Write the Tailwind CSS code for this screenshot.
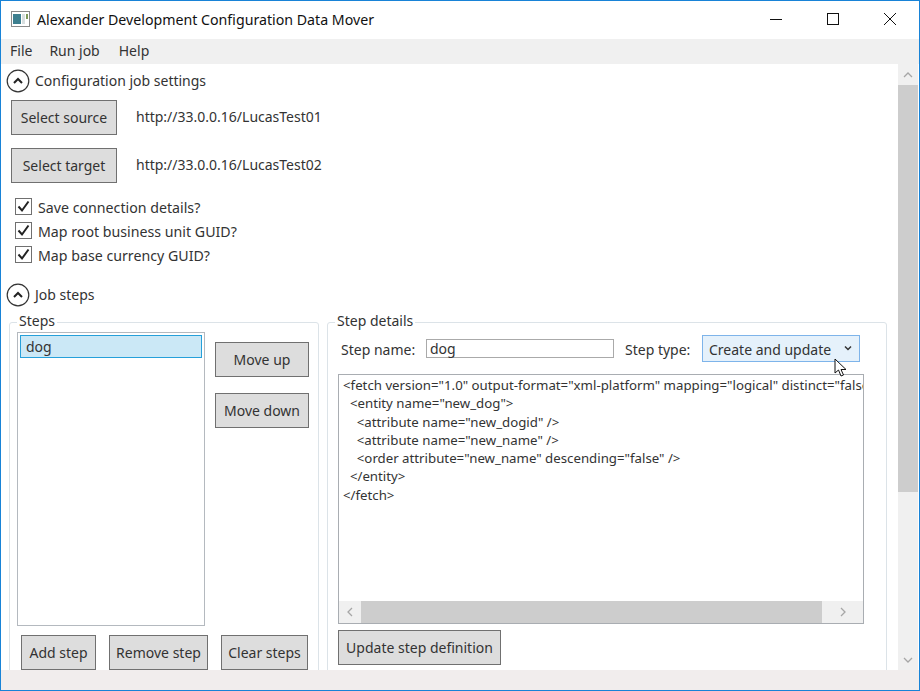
<!DOCTYPE html>
<html lang="en">
<head>
    <meta charset="UTF-8">
    <meta name="viewport" content="width=device-width, initial-scale=1.0">
    <title>Alexander Development Configuration Data Mover</title>
    <script src="https://cdn.jsdelivr.net/npm/@tailwindcss/browser@4"></script>
</head>
<body class="w-[920px] h-[691px] overflow-hidden bg-white">
    <div class="w-[920px] h-[691px] flex flex-col border border-[#1883d7] font-['Noto_Sans',sans-serif] text-[14px] leading-5 text-[#333]">

        <!-- Title bar -->
        <div class="h-[38px] shrink-0 flex items-center pl-[10px] pb-[2px] text-[#111]">
            <svg class="w-[19px] h-[16px]" viewBox="0 0 19 16">
                <rect x="0.5" y="0.5" width="18" height="15" fill="#fff" stroke="#8a8a8a"/>
                <rect x="2" y="3" width="8" height="10" fill="#3d7f8f"/>
                <rect x="11" y="3" width="3" height="10" fill="#d8dfe0"/>
                <rect x="15" y="3" width="2" height="5" fill="#7d9a5a"/>
            </svg>
            <span class="ml-[7px] mt-[2px] text-[14.2px] text-[#111]">Alexander Development Configuration Data Mover</span>
            <div class="ml-auto flex items-center">
                <svg class="w-3 h-3 mr-[45px]" viewBox="0 0 12 12"><path d="M0 6.5H12" stroke="#111" fill="none"/></svg>
                <svg class="w-3 h-3 mr-[45px]" viewBox="0 0 12 12"><rect x="0.5" y="0.5" width="11" height="11" stroke="#111" fill="none"/></svg>
                <svg class="w-3 h-3 mr-[23px]" viewBox="0 0 12 12"><path d="M0 0L12 12M12 0L0 12" stroke="#111" fill="none"/></svg>
            </div>
        </div>

        <!-- Menu -->
        <div class="h-[25px] shrink-0 bg-[#f0f0f0] flex items-center pl-[9px] pb-[1px] gap-[17px]">
            <span>File</span>
            <span>Run job</span>
            <span class="ml-[2px]">Help</span>
        </div>

        <!-- Content and scrollbar -->
        <div class="h-[606px] shrink-0 flex overflow-hidden">
            <div class="w-[897px] shrink-0 pl-[5px] overflow-hidden">
                <div class="h-[34px] flex items-center gap-[5px]">
                    <svg class="w-6 h-6" viewBox="0 0 24 24"><circle cx="12" cy="12" r="10.8" fill="#fff" stroke="#333" stroke-width="1.2"/><path d="M8 14L12 10L16 14" fill="none" stroke="#222" stroke-width="2"/></svg>
                    <span>Configuration job settings</span>
                </div>

                <div class="pl-[5px] flex items-center gap-[19px] mt-[2px]">
                    <button class="w-[106px] h-[35px] bg-[#dddddd] border border-[#707070] text-[#333]">Select source</button>
                    <span class="-mt-[2px]">http://33.0.0.16/LucasTest01</span>
                </div>
                <div class="pl-[5px] flex items-center gap-[19px] mt-[13px]">
                    <button class="w-[106px] h-[35px] bg-[#dddddd] border border-[#707070] text-[#333]">Select target</button>
                    <span class="-mt-[2px]">http://33.0.0.16/LucasTest02</span>
                </div>

                <div class="pl-[9px] mt-[15px] flex flex-col gap-[7px]">
                    <div class="h-[17px] flex items-center gap-[6px]">
                        <svg class="w-[17px] h-[17px]" viewBox="0 0 17 17"><rect x="0.5" y="0.5" width="16" height="16" fill="#fff" stroke="#707070"/><path d="M3.5 8.5L7 12.5L13.5 3.5" fill="none" stroke="#222" stroke-width="2"/></svg>
                        <span class="mt-[2px] text-[14.2px]">Save connection details?</span>
                    </div>
                    <div class="h-[17px] flex items-center gap-[6px]">
                        <svg class="w-[17px] h-[17px]" viewBox="0 0 17 17"><rect x="0.5" y="0.5" width="16" height="16" fill="#fff" stroke="#707070"/><path d="M3.5 8.5L7 12.5L13.5 3.5" fill="none" stroke="#222" stroke-width="2"/></svg>
                        <span class="mt-[2px] text-[14.2px]">Map root business unit GUID?</span>
                    </div>
                    <div class="h-[17px] flex items-center gap-[6px]">
                        <svg class="w-[17px] h-[17px]" viewBox="0 0 17 17"><rect x="0.5" y="0.5" width="16" height="16" fill="#fff" stroke="#707070"/><path d="M3.5 8.5L7 12.5L13.5 3.5" fill="none" stroke="#222" stroke-width="2"/></svg>
                        <span class="mt-[2px] text-[14.2px]">Map base currency GUID?</span>
                    </div>
                </div>

                <div class="h-[34px] flex items-center gap-[5px] mt-[15px]">
                    <svg class="w-6 h-6" viewBox="0 0 24 24"><circle cx="12" cy="12" r="10.8" fill="#fff" stroke="#333" stroke-width="1.2"/><path d="M8 14L12 10L16 14" fill="none" stroke="#222" stroke-width="2"/></svg>
                    <span class="-mt-[1px]">Job steps</span>
                </div>

                <div class="flex mt-[10px] ml-[3px] gap-[8px]">
                    <!-- Steps group -->
                    <div class="relative w-[310px] h-[360px] shrink-0 border border-[#dce3e8] rounded-[3px] pl-[7px] pt-[9px]">
                        <span class="absolute left-[7px] -top-[12px] bg-white px-[2px]">Steps</span>
                        <div class="flex gap-[10px]">
                            <div class="w-[188px] h-[294px] shrink-0 border border-[#b4b9bf] p-[2px]">
                                <div class="h-[23px] bg-[#cbe8f6] border border-[#26a0da] pl-[5px] leading-[22px]">dog</div>
                            </div>
                            <div class="flex flex-col gap-[16px] pt-[10px]">
                                <button class="w-[94px] h-[35px] bg-[#dddddd] border border-[#707070]">Move up</button>
                                <button class="w-[94px] h-[35px] bg-[#dddddd] border border-[#707070]">Move down</button>
                            </div>
                        </div>
                        <div class="flex mt-[9px] pl-[4px]">
                            <button class="w-[75px] h-[35px] bg-[#dddddd] border border-[#707070]">Add step</button>
                            <button class="w-[99px] h-[35px] ml-[13px] bg-[#dddddd] border border-[#707070]">Remove step</button>
                            <button class="w-[87px] h-[35px] ml-[13px] bg-[#dddddd] border border-[#707070]">Clear steps</button>
                        </div>
                    </div>

                    <!-- Step details group -->
                    <div class="relative w-[560px] h-[360px] shrink-0 border border-[#dce3e8] rounded-[3px] pl-[10px] pt-[12px]">
                        <span class="absolute left-[7px] -top-[12px] bg-white px-[2px]">Step details</span>
                        <div class="flex items-center h-[26px]">
                            <span class="ml-[3px] mt-[3px] w-[85px] shrink-0">Step name:</span>
                            <div class="w-[188px] h-[19px] shrink-0 border border-[#aaaaaa] pl-[3px] leading-[17px]">dog</div>
                            <span class="ml-[11px] mt-[3px] w-[77px] shrink-0">Step type:</span>
                            <div class="w-[158px] h-[27px] shrink-0 bg-[#e5f1fb] border border-[#7eb4ea] flex items-center pl-[6px]">
                                <span class="mt-[3px]">Create and update</span>
                                <svg class="w-2 h-[6px] ml-auto mr-[7px]" viewBox="0 0 8 6"><path d="M1 1.5L4 4.5L7 1.5" fill="none" stroke="#333" stroke-width="1.5"/></svg>
                            </div>
                        </div>

                        <div class="w-[526px] h-[250px] mt-[13px] border border-[#a9adb2] flex flex-col">
                            <pre class="flex-1 overflow-hidden pl-[4px] pt-[1px] font-['Noto_Sans',sans-serif] text-[13.25px] leading-[18.3px] text-[#333]">&lt;fetch version="1.0" output-format="xml-platform" mapping="logical" distinct="false"&gt;
  &lt;entity name="new_dog"&gt;
    &lt;attribute name="new_dogid" /&gt;
    &lt;attribute name="new_name" /&gt;
    &lt;order attribute="new_name" descending="false" /&gt;
  &lt;/entity&gt;
&lt;/fetch&gt;</pre>
                            <div class="h-[22px] shrink-0 bg-[#f0f0f0] flex items-center">
                                <div class="w-[22px] flex justify-center"><svg class="w-[6px] h-[10px]" viewBox="0 0 6 10"><path d="M5 1L1 5L5 9" fill="none" stroke="#a6a6a6" stroke-width="1.3"/></svg></div>
                                <div class="w-[461px] h-full bg-[#cdcdcd]"></div>
                                <div class="flex-1 flex justify-center"><svg class="w-[6px] h-[10px]" viewBox="0 0 6 10"><path d="M1 1L5 5L1 9" fill="none" stroke="#a6a6a6" stroke-width="1.3"/></svg></div>
                            </div>
                        </div>
                        <button class="w-[163px] h-[35px] mt-[6px] bg-[#dddddd] border border-[#707070]">Update step definition</button>
                    </div>
                </div>
            </div>

            <!-- Vertical scrollbar -->
            <div class="w-[20px] shrink-0 bg-[#f0f0f0] flex flex-col">
                <div class="h-[21px] flex items-center justify-center"><svg class="w-[10px] h-[6px]" viewBox="0 0 10 6"><path d="M1 5L5 1L9 5" fill="none" stroke="#a6a6a6" stroke-width="1.3"/></svg></div>
                <div class="h-[407px] bg-[#cdcdcd]"></div>
                <div class="mt-auto h-[21px] flex items-center justify-center"><svg class="w-[10px] h-[6px]" viewBox="0 0 10 6"><path d="M1 1L5 5L9 1" fill="none" stroke="#a6a6a6" stroke-width="1.3"/></svg></div>
            </div>
        </div>

        <!-- Status bar -->
        <div class="flex-1 bg-[#f1eded]"></div>
    </div>

    <!-- Mouse pointer -->
    <svg class="absolute left-[834px] top-[358px] w-[14px] h-[19px]" viewBox="0 0 14 19"><path d="M1 1V15L4.5 12L7 18L9.5 17L7 11.5H12Z" fill="#fff" stroke="#111"/></svg>
</body>
</html>
